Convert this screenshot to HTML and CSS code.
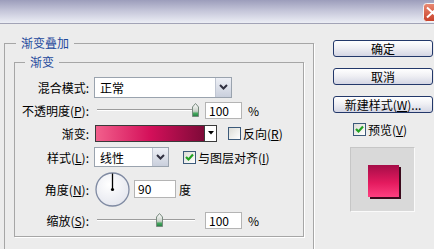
FILE: index.html
```html
<!DOCTYPE html>
<html>
  <head>
    <meta charset="utf-8">
    <title>图层样式 - 渐变叠加</title>
    <link rel="stylesheet" href="styles.css">
  </head>
  <body>

    <div class="titlebar">
      <svg class="close" width="11" height="19" viewBox="0 0 11 19">
        <defs>
          <linearGradient id="red" x1="0" y1="0" x2="0" y2="1">
            <stop offset="0" stop-color="#e98a72"/>
            <stop offset="1" stop-color="#c8402a"/>
          </linearGradient>
        </defs>
        <rect x="0.5" y="0.5" width="20" height="18" rx="3" fill="url(#red)" stroke="#f4f4f4"/>
        <path d="M4 4.5 L15 14.5 M15 4.5 L4 14.5" stroke="#fff" stroke-width="2"/>
      </svg>
    </div>

    <div class="main">
      <fieldset class="group outer">
        <legend>渐变叠加</legend>

        <fieldset class="group inner">
          <legend>渐变</legend>

          <div class="form">
            <!-- blend mode -->
            <label>混合模式:</label>
            <div class="ctl">
              <div class="select wide"><span>正常</span><i class="drop"></i></div>
            </div>

            <!-- opacity -->
            <label>不透明度(<u>P</u>):</label>
            <div class="ctl">
              <div class="slider"><div class="track"></div><i class="thumb" style="left: 95px"></i></div>
              <div class="num">100</div>
              <span class="unit">%</span>
            </div>

            <!-- gradient -->
            <label>渐变:</label>
            <div class="ctl">
              <div class="swatch"></div>
              <i class="swatch-drop"></i>
              <span class="check"></span>
              <span class="check-text">反向(<u>R</u>)</span>
            </div>

            <!-- style -->
            <label>样式(<u>L</u>):</label>
            <div class="ctl">
              <div class="select short"><span>线性</span><i class="drop"></i></div>
              <span class="check on"></span>
              <span class="check-text">与图层对齐(<u>I</u>)</span>
            </div>

            <!-- angle -->
            <label>角度(<u>N</u>):</label>
            <div class="ctl">
              <svg class="dial" width="35" height="35" viewBox="0 0 35 35">
                <defs>
                  <radialGradient id="dialbg" cx="0.4" cy="0.35" r="0.7">
                    <stop offset="0" stop-color="#ffffff"/>
                    <stop offset="1" stop-color="#e4e6ee"/>
                  </radialGradient>
                </defs>
                <circle cx="17.5" cy="17.5" r="16.5" fill="url(#dialbg)" stroke="#7f8aa2" stroke-width="1.3"/>
                <line x1="17.5" y1="17.5" x2="17.5" y2="1.5" stroke="#000" stroke-width="1.3"/>
                <circle cx="17.5" cy="17.5" r="1.6" fill="#000"/>
              </svg>
              <div class="num angle">90</div>
              <span class="unit deg">度</span>
            </div>

            <!-- scale -->
            <label>缩放(<u>S</u>):</label>
            <div class="ctl">
              <div class="slider"><div class="track"></div><i class="thumb" style="left: 59px"></i></div>
              <div class="num">100</div>
              <span class="unit">%</span>
            </div>
          </div>
        </fieldset>
      </fieldset>

      <div class="side">
        <button>确定</button>
        <button>取消</button>
        <button>新建样式(<u>W</u>)...</button>
        <div class="preview-check">
          <span class="check on"></span>
          <span class="check-text">预览(<u>V</u>)</span>
        </div>
        <div class="preview"><div class="square"></div></div>
      </div>
    </div>

  </body>
</html>
```

FILE: styles.css
```css
/* General */

* {
  box-sizing: border-box;
}

html, body {
  margin: 0;
  height: 100%;
}

body {
  background-color: #ececec;
  font-family: "Noto Sans CJK SC", "Liberation Sans", sans-serif;
  font-size: 12px;
  color: #000;
  overflow: hidden;
}

u {
  text-decoration: underline;
  text-underline-offset: 1px;
}

/* Title bar */

.titlebar {
  height: 24px;
  display: flex;
  justify-content: flex-end;
  align-items: flex-start;
  padding-top: 3px;
  background: linear-gradient(#9c9dbb, #c3c4d8 45%, #eceef5);
  border-bottom: 1px solid #a2a3b6;
}

.close {
  display: block;
}

/* Layout */

.main {
  display: flex;
  padding-left: 4px;
}

.group {
  margin: 0;
  padding: 0;
  border: 1px solid #a6a6a6;
  box-shadow: 1px 1px 0 #fff;
}

.group legend {
  padding: 0 5px;
  line-height: 14px;
  color: #1f4a9c;
}

.outer {
  width: 310px;
  margin-top: 12px;
  padding-bottom: 40px;
}

.outer legend {
  margin-left: 11px;
}

.inner {
  margin: 5px 9px 0 9px;
  padding: 7px 0 4px 0;
}

.inner legend {
  margin-left: 10px;
}

/* Form grid */

.form {
  display: grid;
  grid-template-columns: 74px 1fr;
  grid-template-rows: 22px 24px 22px 26px 38px 24px;
  column-gap: 5px;
  align-items: center;
}

.form label {
  text-align: right;
  white-space: nowrap;
}

.ctl {
  display: flex;
  align-items: center;
}

/* Select boxes */

.select {
  display: flex;
  align-items: center;
  background: #fff;
  border: 1px solid #9aa3ae;
  padding-left: 5px;
}

.select span {
  flex: 1;
}

.select.wide {
  width: 138px;
  height: 21px;
}

.select.short {
  width: 75px;
  height: 20px;
}

.drop {
  width: 16px;
  height: 100%;
  border-left: 1px solid #c0c6d2;
  background:
    url("data:image/svg+xml,%3Csvg xmlns='http://www.w3.org/2000/svg' width='9' height='6'%3E%3Cpath d='M1 1 L4.5 4.5 L8 1' fill='none' stroke='%23303040' stroke-width='2'/%3E%3C/svg%3E") center no-repeat,
    linear-gradient(#eef0f6, #c9cfdc);
}

/* Sliders */

.slider {
  position: relative;
  width: 98px;
  height: 14px;
  margin-left: 3px;
}

.track {
  margin-top: 6px;
  height: 2px;
  border-top: 1px solid #9c9c9c;
  border-bottom: 1px solid #fff;
}

.thumb {
  position: absolute;
  top: 0;
  width: 7px;
  height: 14px;
  background: url("data:image/svg+xml,%3Csvg xmlns='http://www.w3.org/2000/svg' width='7' height='14'%3E%3Cdefs%3E%3ClinearGradient id='g' x1='0' y1='0' x2='0' y2='1'%3E%3Cstop offset='0' stop-color='%23ffffff'/%3E%3Cstop offset='0.6' stop-color='%23c8d0c8'/%3E%3Cstop offset='0.75' stop-color='%2348a860'/%3E%3Cstop offset='1' stop-color='%23208040'/%3E%3C/linearGradient%3E%3C/defs%3E%3Cpath d='M0.5 4 L3.5 0.5 L6.5 4 L6.5 13.5 L0.5 13.5 Z' fill='url(%23g)' stroke='%23788a7e'/%3E%3C/svg%3E") no-repeat;
}

/* Number fields */

.num {
  width: 37px;
  height: 17px;
  margin-left: 10px;
  background: #fff;
  border: 1px solid #b4b4b4;
  line-height: 15px;
  padding-left: 3px;
}

.num.angle {
  width: 42px;
  height: 18px;
  margin-left: 4px;
  line-height: 16px;
}

.unit {
  margin-left: 6px;
}

.unit.deg {
  margin-left: 3px;
}

/* Gradient swatch */

.swatch {
  width: 110px;
  height: 17px;
  margin-left: 1px;
  border: 1px solid #3a3a3a;
  background: linear-gradient(to right, #f2608c, #d4105a 50%, #7e0a38);
}

.swatch-drop {
  width: 12px;
  height: 17px;
  border: 1px solid #3a3a3a;
  border-left: 0;
  background:
    url("data:image/svg+xml,%3Csvg xmlns='http://www.w3.org/2000/svg' width='6' height='4'%3E%3Cpath d='M0 0 L6 0 L3 3.5 Z' fill='%23000'/%3E%3C/svg%3E") center no-repeat,
    #fff;
}

/* Checkboxes */

.check {
  width: 13px;
  height: 13px;
  margin-left: 11px;
  border: 1px solid #3c5a7a;
  background: linear-gradient(135deg, #dcdcd6, #fff);
}

.check.on {
  margin-left: 14px;
  background:
    url("data:image/svg+xml,%3Csvg xmlns='http://www.w3.org/2000/svg' width='11' height='11'%3E%3Cpath d='M2 5 L4.5 7.5 L9 2.5' fill='none' stroke='%2321a121' stroke-width='2.2'/%3E%3C/svg%3E") center no-repeat,
    linear-gradient(135deg, #dcdcd6, #fff);
}

.check-text {
  margin-left: 2px;
  white-space: nowrap;
}

/* Angle dial */

.dial {
  display: block;
  margin-left: 1px;
}

/* Right column */

.side {
  width: 100px;
  margin-left: 19px;
  padding-top: 16px;
  display: flex;
  flex-direction: column;
}

.side button {
  height: 17px;
  margin-bottom: 11px;
  padding: 0;
  font: inherit;
  color: #000;
  border: 1px solid #23386a;
  border-radius: 3px;
  background: linear-gradient(#ffffff, #f0f0f4 45%, #d4d6e4);
  line-height: 14px;
}

.preview-check {
  display: flex;
  align-items: center;
  margin-top: -3px;
  padding-left: 6px;
}

.preview {
  width: 65px;
  height: 65px;
  margin-top: 9px;
  margin-left: 17px;
  background: #d9d9d9;
  border: 1px solid #c6c6c6;
  border-right-color: #fafafa;
  border-bottom-color: #fafafa;
  display: flex;
  align-items: center;
  justify-content: center;
}

.square {
  width: 31px;
  height: 32px;
  margin: 2px 0 0 1px;
  background: linear-gradient(#a50d48, #e31a5e 55%, #ff3f80);
  box-shadow: 2px 2px 0 #3b0a1c;
}
```
